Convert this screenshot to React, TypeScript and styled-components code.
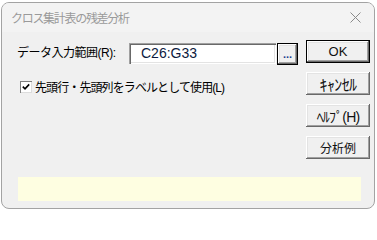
import React from "react";
import styled, { createGlobalStyle, css } from "styled-components";

const GlobalStyle = createGlobalStyle`
  html, body { margin: 0; padding: 0; background: #ffffff; }
  body { font-family: "Noto Sans CJK JP", "Noto Sans", sans-serif; }
`;

const Window = styled.div`
  box-sizing: border-box;
  width: 374px;
  height: 207px;
  margin: 2px 0 0 1px;
  border: 1px solid #a3a3a3;
  border-radius: 8px;
  background: #f0f0f0;
  overflow: hidden;
  display: flex;
  flex-direction: column;
`;

const TitleBar = styled.div`
  height: 28px;
  flex: none;
  display: flex;
  align-items: center;
  justify-content: space-between;
  padding: 0 9px 1px 9px;
  background: #f3f3f3;
`;

const Title = styled.span`
  font-size: 12px;
  color: #9a9a9a;
  letter-spacing: -1.3px;
`;

const CloseIcon = styled.svg`
  width: 11px;
  height: 11px;
  margin-right: 4px;
  display: block;
`;

const Body = styled.div`
  flex: 1;
  display: flex;
  flex-direction: column;
  padding: 8px 4px 7px 15px;
`;

const Top = styled.div`
  display: flex;
  gap: 8px;
`;

const Left = styled.div`
  width: 282px;
  display: flex;
  flex-direction: column;
  padding-top: 3px;
`;

const RangeRow = styled.div`
  display: flex;
  align-items: flex-start;
`;

const Label = styled.span`
  width: 112px;
  font-family: "Liberation Sans", "Noto Sans CJK JP", sans-serif;
  font-size: 12px;
  line-height: 21px;
  color: #000;
  letter-spacing: -0.5px;
  white-space: nowrap;
`;

const Input = styled.div`
  box-sizing: border-box;
  width: 147px;
  height: 21px;
  background: #fff;
  box-shadow: inset 1px 1px #a0a0a0, inset 2px 2px #696969, inset -1px -1px #ffffff, inset -2px -2px #e3e3e3;
  font-family: "Liberation Sans", Arial, sans-serif;
  font-size: 14px;
  line-height: 21px;
  padding-left: 12px;
  color: #0c1a40;
`;

const raised = css`
  box-sizing: border-box;
  background: #f0f0f0;
  border: none;
  padding: 0;
  color: #000;
  box-shadow: inset -1px -1px #696969, inset 1px 1px #ffffff, inset -2px -2px #a0a0a0, inset 2px 2px #e3e3e3;
`;

const Button = styled.div<{ $default?: boolean; $size?: number; $spacing?: number }>`
  ${raised}
  width: 64px;
  height: 23px;
  display: flex;
  align-items: center;
  justify-content: center;
  font-family: "Liberation Sans", "Noto Sans CJK JP", sans-serif;
  font-size: ${(p) => p.$size ?? 13}px;
  letter-spacing: ${(p) => p.$spacing ?? 0}px;
  color: #111;
  ${(p) =>
    p.$default &&
    css`
      box-shadow: inset 0 0 0 1px #000, inset -2px -2px #696969, inset 2px 2px #ffffff,
        inset -3px -3px #a0a0a0, inset 3px 3px #e3e3e3;
    `}
`;

const BrowseButton = styled.div`
  ${raised}
  width: 21px;
  height: 22px;
  margin-left: 1px;
  display: flex;
  justify-content: center;
  align-items: flex-end;
  font-family: "Liberation Sans", Arial, sans-serif;
  font-weight: bold;
  font-size: 11px;
  line-height: 11px;
  padding-bottom: 5px;
  color: #1c3d8f;
  box-shadow: inset 0 0 0 1px #000, inset -2px -2px #696969, inset 2px 2px #ffffff,
    inset -3px -3px #a0a0a0, inset 3px 3px #e3e3e3;
`;

const CheckRow = styled.div`
  display: flex;
  align-items: center;
  margin-top: 13px;
  margin-left: 3px;
  gap: 3px;
`;

const CheckBox = styled.div`
  box-sizing: border-box;
  width: 12px;
  height: 12px;
  background: #fff;
  box-shadow: inset 1px 1px #808080, inset -1px -1px #dcdcdc;
  display: flex;
  align-items: center;
  justify-content: center;
`;

const CheckLabel = styled.span`
  font-family: "Liberation Sans", "Noto Sans CJK JP", sans-serif;
  font-size: 12px;
  color: #000;
  letter-spacing: -0.9px;
  white-space: nowrap;
`;

const Buttons = styled.div`
  display: flex;
  flex-direction: column;
  gap: 9px;
`;

const HintBox = styled.div`
  margin-top: auto;
  margin-left: 1px;
  width: 343px;
  height: 24px;
  background: #fefee1;
`;

export default function App() {
  return (
    <>
      <GlobalStyle />
      <Window>
        <TitleBar>
          <Title>クロス集計表の残差分析</Title>
          <CloseIcon viewBox="0 0 11 11">
            <path d="M0.5 0.5 L10.5 10.5 M10.5 0.5 L0.5 10.5" stroke="#8a8a8a" strokeWidth="1" fill="none" />
          </CloseIcon>
        </TitleBar>
        <Body>
          <Top>
            <Left>
              <RangeRow>
                <Label>データ入力範囲(R):</Label>
                <Input>C26:G33</Input>
                <BrowseButton>...</BrowseButton>
              </RangeRow>
              <CheckRow>
                <CheckBox>
                  <svg width="8" height="8" viewBox="0 0 8 8">
                    <path d="M0.8 3.6 L3 5.8 L7.2 1.4" stroke="#000" strokeWidth="1.6" fill="none" />
                  </svg>
                </CheckBox>
                <CheckLabel>先頭行・先頭列をラベルとして使用(L)</CheckLabel>
              </CheckRow>
            </Left>
            <Buttons>
              <Button $default>OK</Button>
              <Button $size={16} $spacing={-0.6}>ｷｬﾝｾﾙ</Button>
              <Button $size={14} $spacing={-0.8}>ﾍﾙﾌﾟ(H)</Button>
              <Button $size={12}>分析例</Button>
            </Buttons>
          </Top>
          <HintBox />
        </Body>
      </Window>
    </>
  );
}
